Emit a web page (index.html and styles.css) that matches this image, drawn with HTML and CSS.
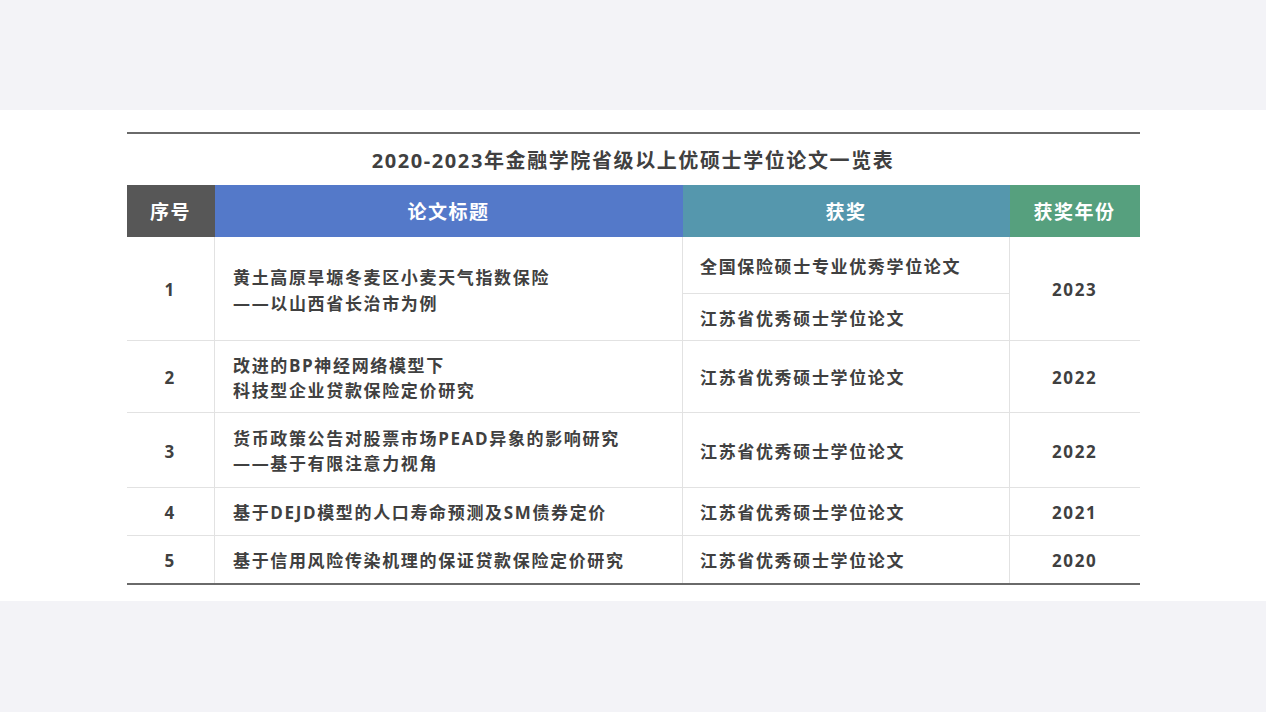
FILE: index.html
```html
<!DOCTYPE html>
<html lang="zh-CN">
<head>
<meta charset="utf-8">
<title>2020-2023年金融学院省级以上优硕士学位论文一览表</title>
<link rel="stylesheet" href="styles.css">
</head>
<body>
<div class="top-band"></div>
<section class="sheet">
  <div class="content">
    <div class="rule"></div>
    <h1 class="title">2020-2023年金融学院省级以上优硕士学位论文一览表</h1>
    <table class="thesis-table">
      <colgroup>
        <col class="c-no">
        <col class="c-title">
        <col class="c-award">
        <col class="c-year">
      </colgroup>
      <thead>
        <tr class="head-row">
          <th class="h-no">序号</th>
          <th class="h-title">论文标题</th>
          <th class="h-award">获奖</th>
          <th class="h-year">获奖年份</th>
        </tr>
      </thead>
      <tbody>
        <tr class="r1a">
          <td class="no" rowspan="2">1</td>
          <td class="ttl" rowspan="2">黄土高原旱塬冬麦区小麦天气指数保险<br>——以山西省长治市为例</td>
          <td class="award">全国保险硕士专业优秀学位论文</td>
          <td class="year" rowspan="2">2023</td>
        </tr>
        <tr class="r1b">
          <td class="award">江苏省优秀硕士学位论文</td>
        </tr>
        <tr class="r2">
          <td class="no">2</td>
          <td class="ttl">改进的BP神经网络模型下<br>科技型企业贷款保险定价研究</td>
          <td class="award">江苏省优秀硕士学位论文</td>
          <td class="year">2022</td>
        </tr>
        <tr class="r3">
          <td class="no">3</td>
          <td class="ttl">货币政策公告对股票市场PEAD异象的影响研究<br>——基于有限注意力视角</td>
          <td class="award">江苏省优秀硕士学位论文</td>
          <td class="year">2022</td>
        </tr>
        <tr class="r4">
          <td class="no">4</td>
          <td class="ttl">基于DEJD模型的人口寿命预测及SM债券定价</td>
          <td class="award">江苏省优秀硕士学位论文</td>
          <td class="year">2021</td>
        </tr>
        <tr class="r5">
          <td class="no">5</td>
          <td class="ttl">基于信用风险传染机理的保证贷款保险定价研究</td>
          <td class="award">江苏省优秀硕士学位论文</td>
          <td class="year">2020</td>
        </tr>
      </tbody>
    </table>
  </div>
</section>
</body>
</html>
```

FILE: styles.css
```css
html, body {
  margin: 0;
  padding: 0;
}

body {
  background: #f3f3f7;
  font-family: "Open Sans", "Noto Sans CJK SC", sans-serif;
  color: #404040;
  width: 1266px;
  height: 712px;
  overflow: hidden;
}

.top-band {
  height: 110px;
}

.sheet {
  background: #ffffff;
  padding: 22px 0 16px;
}

.content {
  width: 1013px;
  margin: 0 auto;
}

.rule {
  height: 2px;
  background: #6a6a6a;
}

.title {
  margin: 0;
  height: 51px;
  line-height: 53px;
  text-align: center;
  font-size: 20px;
  font-weight: 700;
  letter-spacing: 1.6px;
  color: #404040;
}

.thesis-table {
  width: 1013px;
  border-collapse: collapse;
  table-layout: fixed;
  border-bottom: 2px solid #6a6a6a;
}

.c-no { width: 88px; }
.c-title { width: 468px; }
.c-award { width: 327px; }
.c-year { width: 130px; }

.head-row th {
  height: 52px;
  padding: 0;
  color: #ffffff;
  font-size: 19px;
  font-weight: 700;
  letter-spacing: 1.5px;
  text-align: center;
  vertical-align: middle;
}

.h-no { background: #575757; }
.h-title { background: #5479c9; }
.h-award { background: #5597ad; }
.h-year { background: #56a07e; }

.thesis-table td {
  padding: 2px 0 0;
  font-size: 17px;
  font-weight: 700;
  letter-spacing: 1.65px;
  line-height: 25px;
  color: #404040;
  vertical-align: middle;
  border-top: 1px solid #e2e2e2;
  border-left: 1px solid #e2e2e2;
}

.thesis-table tbody tr:first-child td {
  border-top: none;
}

.thesis-table td.no {
  border-left: none;
  text-align: center;
}

.thesis-table td.ttl {
  padding-left: 18px;
  text-align: left;
}

.thesis-table td.award {
  padding-left: 17px;
  text-align: left;
}

.thesis-table td.year {
  text-align: center;
}

.r1a td { height: 54px; }
.r1b td { height: 44px; }
.r2 td { height: 69px; }
.r3 td { height: 72px; }
.r4 td { height: 45px; }
.r5 td { height: 45px; }

.r1a td.ttl {
  line-height: 26px;
  padding-top: 5px;
}
```
